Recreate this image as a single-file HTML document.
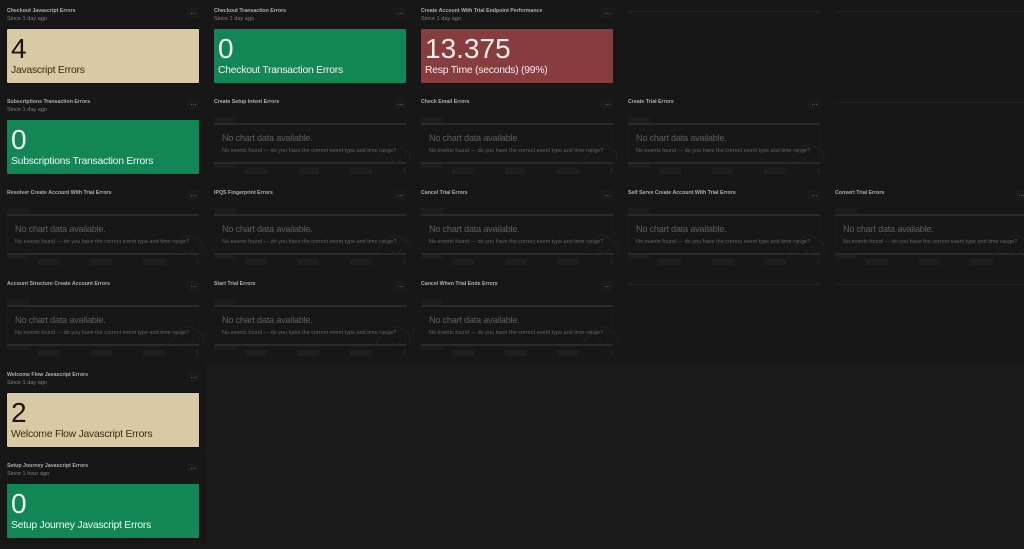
<!DOCTYPE html>
<html><head><meta charset="utf-8"><style>
html,body{margin:0;padding:0;background:#1a1a1a}
#p{position:relative;width:1024px;height:549px;overflow:hidden;background:#1a1a1a;font-family:"Liberation Sans",sans-serif;filter:blur(.35px)}
.t{position:absolute;width:206px;height:90px;background:#171717;overflow:hidden}
.t>*{position:absolute}
.n{left:7px;top:8.3px;font-size:5.25px;line-height:7px;font-weight:bold;color:#b0b0b0;white-space:nowrap}
.s{left:7px;top:15.5px;font-size:5.6px;line-height:7px;color:#808080;white-space:nowrap}
.m{left:187px;top:8px;width:12px;height:10px;border-radius:2px;background:#1b1b1b}
.m:after{content:"";position:absolute;left:5.5px;top:4.5px;width:1px;height:1px;background:#5a5a5a;box-shadow:-2px 0 0 #5a5a5a,2px 0 0 #5a5a5a}
.b{left:7px;top:29px;width:192px;height:54px;border-radius:1px}
.b i{position:absolute;left:4px;top:3.5px;font-style:normal;font-size:28px;line-height:32px;white-space:nowrap}
.b u{position:absolute;left:4px;top:35px;text-decoration:none;font-size:10.4px;line-height:14px;white-space:nowrap;letter-spacing:-.25px}
.y{background:#d9c9a5;box-shadow:0 0 1px #000}.y i{color:#1c140a}.y u{color:#3c2b10}
.g{background:#138656;color:#f2f5f2}.r{background:#873c3d;color:#f5eeee}
.a{left:7px;top:26px;width:22px;height:6px;background:#1d1d1d}
.c{left:7px;top:32px;width:192px;height:2px;background:#2b2b2b}
.f{left:7px;top:33px;width:190px;height:38px;border:1px solid #1b1b1b}
.d{left:7px;top:71px;width:22px;height:6px;background:#1d1d1d}
.e{left:7px;top:71px;width:192px;height:1.5px;background:#2b2b2b}
.k{top:77px;height:6px;background:#1f1f1f}
.h{left:15px;top:41px;font-size:9.2px;line-height:12px;color:#5e5e5e;white-space:nowrap;letter-spacing:-.25px}
.q{left:15px;top:56px;font-size:5.5px;line-height:8px;color:#636363;white-space:nowrap}
.o{left:168px;top:50px}
.l{left:7px;top:11px;width:192px;height:1px;background:#212121}
</style></head><body><div id="p">

<div class="t" style="left:0;top:0"><div class="n">Checkout Javascript Errors</div><div class="s">Since 1 day ago</div><div class="m"></div><div class="b y"><i>4</i><u>Javascript Errors</u></div></div>
<div class="t" style="left:207px;top:0"><div class="n">Checkout Transaction Errors</div><div class="s">Since 1 day ago</div><div class="m"></div><div class="b g"><i>0</i><u>Checkout Transaction Errors</u></div></div>
<div class="t" style="left:414px;top:0"><div class="n">Create Account With Trial Endpoint Performance</div><div class="s">Since 1 day ago</div><div class="m"></div><div class="b r"><i>13.375</i><u>Resp Time (seconds) (99%)</u></div></div>
<div class="t" style="left:621px;top:0"><div class="l"></div></div>
<div class="t" style="left:828px;top:0"><div class="l"></div></div>

<div class="t" style="left:0;top:91px"><div class="n">Subscriptions Transaction Errors</div><div class="s">Since 1 day ago</div><div class="m"></div><div class="b g"><i>0</i><u>Subscriptions Transaction Errors</u></div></div>
<div class="t" style="left:207px;top:91px"><div class="n">Create Setup Intent Errors</div><div class="m"></div><div class="f"></div><div class="a"></div><div class="c"></div><div class="d"></div><div class="e"></div><div class="k" style="left:38px;width:22px"></div><div class="k" style="left:91px;width:21px"></div><div class="k" style="left:143px;width:22px"></div><div class="k" style="left:196px;width:3px"></div><div class="h">No chart data available.</div><div class="q">No events found — do you have the correct event type and time range?</div><svg class="o" width="36" height="24" fill="none" stroke="#1f2726" stroke-width=".8"><path d="M1 22C2 14 8 14 10 11C12 3 24 1 28 8C33 8 36 12 35 20"/><path d="M15 17L21 23L27 17"/></svg></div>
<div class="t" style="left:414px;top:91px"><div class="n">Check Email Errors</div><div class="m"></div><div class="f"></div><div class="a"></div><div class="c"></div><div class="d"></div><div class="e"></div><div class="k" style="left:38px;width:22px"></div><div class="k" style="left:91px;width:21px"></div><div class="k" style="left:143px;width:22px"></div><div class="k" style="left:196px;width:3px"></div><div class="h">No chart data available.</div><div class="q">No events found — do you have the correct event type and time range?</div><svg class="o" width="36" height="24" fill="none" stroke="#1f2726" stroke-width=".8"><path d="M1 22C2 14 8 14 10 11C12 3 24 1 28 8C33 8 36 12 35 20"/><path d="M15 17L21 23L27 17"/></svg></div>
<div class="t" style="left:621px;top:91px"><div class="n">Create Trial Errors</div><div class="m"></div><div class="f"></div><div class="a"></div><div class="c"></div><div class="d"></div><div class="e"></div><div class="k" style="left:38px;width:22px"></div><div class="k" style="left:91px;width:21px"></div><div class="k" style="left:143px;width:22px"></div><div class="k" style="left:196px;width:3px"></div><div class="h">No chart data available.</div><div class="q">No events found — do you have the correct event type and time range?</div><svg class="o" width="36" height="24" fill="none" stroke="#1f2726" stroke-width=".8"><path d="M1 22C2 14 8 14 10 11C12 3 24 1 28 8C33 8 36 12 35 20"/><path d="M15 17L21 23L27 17"/></svg></div>
<div class="t" style="left:828px;top:91px"><div class="l"></div></div>

<div class="t" style="left:0;top:182px"><div class="n">Resolver Create Account With Trial Errors</div><div class="m"></div><div class="f"></div><div class="a"></div><div class="c"></div><div class="d"></div><div class="e"></div><div class="k" style="left:38px;width:22px"></div><div class="k" style="left:91px;width:21px"></div><div class="k" style="left:143px;width:22px"></div><div class="k" style="left:196px;width:3px"></div><div class="h">No chart data available.</div><div class="q">No events found — do you have the correct event type and time range?</div><svg class="o" width="36" height="24" fill="none" stroke="#1f2726" stroke-width=".8"><path d="M1 22C2 14 8 14 10 11C12 3 24 1 28 8C33 8 36 12 35 20"/><path d="M15 17L21 23L27 17"/></svg></div>
<div class="t" style="left:207px;top:182px"><div class="n">IPQS Fingerprint Errors</div><div class="m"></div><div class="f"></div><div class="a"></div><div class="c"></div><div class="d"></div><div class="e"></div><div class="k" style="left:38px;width:22px"></div><div class="k" style="left:91px;width:21px"></div><div class="k" style="left:143px;width:22px"></div><div class="k" style="left:196px;width:3px"></div><div class="h">No chart data available.</div><div class="q">No events found — do you have the correct event type and time range?</div><svg class="o" width="36" height="24" fill="none" stroke="#1f2726" stroke-width=".8"><path d="M1 22C2 14 8 14 10 11C12 3 24 1 28 8C33 8 36 12 35 20"/><path d="M15 17L21 23L27 17"/></svg></div>
<div class="t" style="left:414px;top:182px"><div class="n">Cancel Trial Errors</div><div class="m"></div><div class="f"></div><div class="a"></div><div class="c"></div><div class="d"></div><div class="e"></div><div class="k" style="left:38px;width:22px"></div><div class="k" style="left:91px;width:21px"></div><div class="k" style="left:143px;width:22px"></div><div class="k" style="left:196px;width:3px"></div><div class="h">No chart data available.</div><div class="q">No events found — do you have the correct event type and time range?</div><svg class="o" width="36" height="24" fill="none" stroke="#1f2726" stroke-width=".8"><path d="M1 22C2 14 8 14 10 11C12 3 24 1 28 8C33 8 36 12 35 20"/><path d="M15 17L21 23L27 17"/></svg></div>
<div class="t" style="left:621px;top:182px"><div class="n">Self Serve Create Account With Trial Errors</div><div class="m"></div><div class="f"></div><div class="a"></div><div class="c"></div><div class="d"></div><div class="e"></div><div class="k" style="left:38px;width:22px"></div><div class="k" style="left:91px;width:21px"></div><div class="k" style="left:143px;width:22px"></div><div class="k" style="left:196px;width:3px"></div><div class="h">No chart data available.</div><div class="q">No events found — do you have the correct event type and time range?</div><svg class="o" width="36" height="24" fill="none" stroke="#1f2726" stroke-width=".8"><path d="M1 22C2 14 8 14 10 11C12 3 24 1 28 8C33 8 36 12 35 20"/><path d="M15 17L21 23L27 17"/></svg></div>
<div class="t" style="left:828px;top:182px"><div class="n">Convert Trial Errors</div><div class="m"></div><div class="f"></div><div class="a"></div><div class="c"></div><div class="d"></div><div class="e"></div><div class="k" style="left:38px;width:22px"></div><div class="k" style="left:91px;width:21px"></div><div class="k" style="left:143px;width:22px"></div><div class="k" style="left:196px;width:3px"></div><div class="h">No chart data available.</div><div class="q">No events found — do you have the correct event type and time range?</div><svg class="o" width="36" height="24" fill="none" stroke="#1f2726" stroke-width=".8"><path d="M1 22C2 14 8 14 10 11C12 3 24 1 28 8C33 8 36 12 35 20"/><path d="M15 17L21 23L27 17"/></svg></div>

<div class="t" style="left:0;top:273px"><div class="n">Account Structure Create Account Errors</div><div class="m"></div><div class="f"></div><div class="a"></div><div class="c"></div><div class="d"></div><div class="e"></div><div class="k" style="left:38px;width:22px"></div><div class="k" style="left:91px;width:21px"></div><div class="k" style="left:143px;width:22px"></div><div class="k" style="left:196px;width:3px"></div><div class="h">No chart data available.</div><div class="q">No events found — do you have the correct event type and time range?</div><svg class="o" width="36" height="24" fill="none" stroke="#1f2726" stroke-width=".8"><path d="M1 22C2 14 8 14 10 11C12 3 24 1 28 8C33 8 36 12 35 20"/><path d="M15 17L21 23L27 17"/></svg></div>
<div class="t" style="left:207px;top:273px"><div class="n">Start Trial Errors</div><div class="m"></div><div class="f"></div><div class="a"></div><div class="c"></div><div class="d"></div><div class="e"></div><div class="k" style="left:38px;width:22px"></div><div class="k" style="left:91px;width:21px"></div><div class="k" style="left:143px;width:22px"></div><div class="k" style="left:196px;width:3px"></div><div class="h">No chart data available.</div><div class="q">No events found — do you have the correct event type and time range?</div><svg class="o" width="36" height="24" fill="none" stroke="#1f2726" stroke-width=".8"><path d="M1 22C2 14 8 14 10 11C12 3 24 1 28 8C33 8 36 12 35 20"/><path d="M15 17L21 23L27 17"/></svg></div>
<div class="t" style="left:414px;top:273px"><div class="n">Cancel When Trial Ends Errors</div><div class="m"></div><div class="f"></div><div class="a"></div><div class="c"></div><div class="d"></div><div class="e"></div><div class="k" style="left:38px;width:22px"></div><div class="k" style="left:91px;width:21px"></div><div class="k" style="left:143px;width:22px"></div><div class="k" style="left:196px;width:3px"></div><div class="h">No chart data available.</div><div class="q">No events found — do you have the correct event type and time range?</div><svg class="o" width="36" height="24" fill="none" stroke="#1f2726" stroke-width=".8"><path d="M1 22C2 14 8 14 10 11C12 3 24 1 28 8C33 8 36 12 35 20"/><path d="M15 17L21 23L27 17"/></svg></div>
<div class="t" style="left:621px;top:273px"><div class="l"></div></div>
<div class="t" style="left:828px;top:273px"><div class="l"></div></div>

<div class="t" style="left:0;top:364px"><div class="n">Welcome Flow Javascript Errors</div><div class="s">Since 1 day ago</div><div class="m"></div><div class="b y"><i>2</i><u>Welcome Flow Javascript Errors</u></div></div>
<div class="t" style="left:0;top:455px"><div class="n">Setup Journey Javascript Errors</div><div class="s">Since 1 hour ago</div><div class="m"></div><div class="b g"><i>0</i><u>Setup Journey Javascript Errors</u></div></div>

</div></body></html>
